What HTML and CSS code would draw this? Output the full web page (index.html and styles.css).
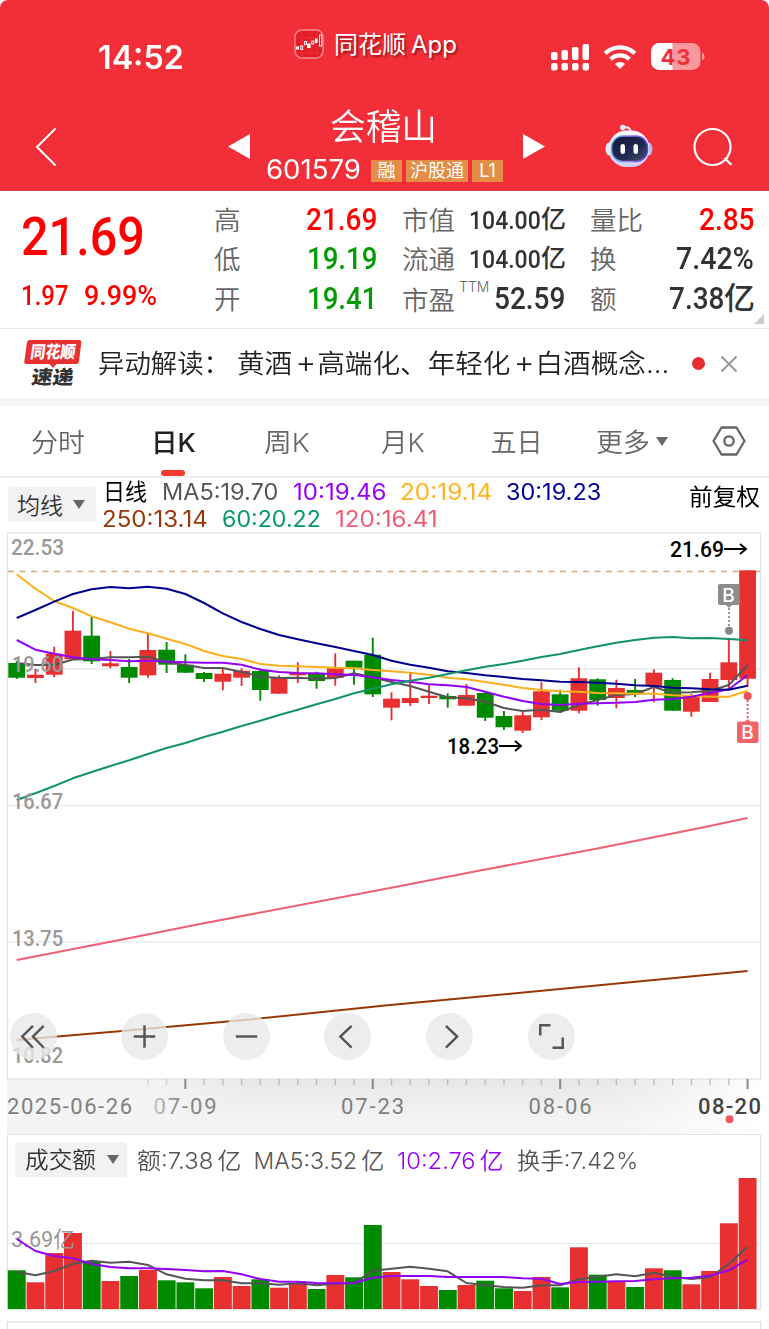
FILE: index.html
```html
<!DOCTYPE html>
<html lang="zh-CN">
<head>
<meta charset="utf-8">
<title>会稽山 601579</title>
<link rel="stylesheet" href="styles.css">
</head>
<body>
<header class="header">
  <div class="status">
    <div class="clock"><span data-w="86">14:52</span></div>
    <div class="brand">
      <svg class="brand-icon" width="30" height="30" viewBox="0 0 30 30"><rect x="1" y="1" width="28" height="28" rx="7" fill="#e51d27" stroke="#f78f94" stroke-width="1.4"/><path d="M1 9h28M1 17h28M1 24h28M8 1v28M16 1v28M23 1v28" stroke="#ee4048" stroke-width=".5"/><g fill="#fff"><rect x="2" y="17.5" width="3" height="3"/><rect x="13" y="14.5" width="3.5" height="4.5"/><rect x="21" y="9.500" width="2.5" height="4.500"/></g><g fill="none" stroke="#fff" stroke-width=".9"><rect x="6.700" y="17" width="2" height="3.500"/><rect x="10.500" y="12.500" width="2" height="3"/><rect x="17.800" y="12" width="2" height="3"/><rect x="25.500" y="6" width="2.300" height="11"/></g></svg>
      <span class="brand-name" data-w="72">同花顺</span><span class="brand-app" data-w="46">App</span>
    </div>
    <div class="indicators">
      <svg width="40" height="28" viewBox="0 0 40 28" fill="#fff"><rect x="1" y="9" width="6.500" height="8" rx="2"/><rect x="11.500" y="7" width="6.500" height="10" rx="2"/><rect x="22" y="4" width="6.500" height="13" rx="2"/><rect x="32.500" y="1" width="6.500" height="16" rx="2"/><rect x="1" y="20" width="6.500" height="7.500" rx="2.200"/><rect x="11.500" y="20" width="6.500" height="7.500" rx="2.200"/><rect x="22" y="20" width="6.500" height="7.500" rx="2.200"/><rect x="32.500" y="20" width="6.500" height="7.500" rx="2.200"/></svg>
      <svg class="wifi" width="34" height="26" viewBox="0 0 34 26"><g fill="none" stroke="#fff" stroke-width="4.300"><path d="M2.200 9.400a21.200 21.200 0 0 1 29.600 0"/><path d="M7.700 15.200a13.300 13.300 0 0 1 18.600 0"/></g><path d="M12 20a7.300 7.300 0 0 1 10 0l-5 5z" fill="#fff"/></svg>
      <svg width="54" height="28" viewBox="0 0 54 28"><defs><clipPath id="bat"><rect width="49.500" height="27" rx="8.500"/></clipPath></defs><g clip-path="url(#bat)"><rect width="50" height="28" fill="#f8979c"/><rect width="21.500" height="28" fill="#fff"/></g><path d="M51 9.500q2.600 1 2.600 4t-2.600 4z" fill="#f8979c"/><text x="9.500" y="21.500" textLength="30" class="bat-text">43</text></svg>
    </div>
  </div>
  <div class="nav">
    <svg class="back" width="24" height="40" viewBox="0 0 24 40"><path d="M21.500 1.500 3 20 21.500 38.500" fill="none" stroke="#fff" stroke-width="2"/></svg>
    <svg class="prev" width="22" height="25" viewBox="0 0 22 25"><path d="M22 0v25L0 12.500z" fill="#fff"/></svg>
    <div class="title">
      <div class="name"><span data-w="107">会稽山</span></div>
      <div class="code-row"><span class="code"><span data-w="95">601579</span></span><span class="tag t1">融</span><span class="tag t2">沪股通</span><span class="tag t1">L1</span></div>
    </div>
    <svg class="next" width="22" height="25" viewBox="0 0 22 25"><path d="M0 0v25l22-12.500z" fill="#fff"/></svg>
    <svg class="robot" width="48" height="44" viewBox="0 0 48 44"><defs><linearGradient id="shell" x1="0" y1="0" x2="0" y2="1"><stop stop-color="#fff"/><stop offset="1" stop-color="#cfcff8"/></linearGradient><linearGradient id="face" x1="0" y1="0" x2="1" y2="1"><stop stop-color="#171a3a"/><stop offset=".6" stop-color="#202950"/><stop offset="1" stop-color="#4d5568"/></linearGradient><linearGradient id="rim"><stop stop-color="#5cb6e8"/><stop offset=".5" stop-color="#9a7cf0"/><stop offset="1" stop-color="#5145ef"/></linearGradient></defs><path d="M18 3.500q7-1.500 7.500 4" fill="none" stroke="#eeeeff" stroke-width="2"/><circle cx="17.800" cy="3.500" r="2.700" fill="#e7e6ff"/><ellipse cx="4" cy="25" rx="3.500" ry="6.500" fill="#e6e6fb"/><ellipse cx="44" cy="25" rx="3.500" ry="6.500" fill="#b8b8e8"/><rect x="3.500" y="6.500" width="41" height="36.500" rx="18" fill="url(#shell)"/><rect x="6.500" y="12" width="36" height="25.500" rx="11.500" fill="url(#face)" stroke="url(#rim)" stroke-width="1.500"/><rect x="15.500" y="20" width="4.500" height="10" rx="2.200" fill="#fff"/><rect x="28.500" y="20" width="4.500" height="10" rx="2.200" fill="#fff"/></svg>
    <svg class="search" width="42" height="42" viewBox="0 0 42 42" fill="none" stroke="#fff" stroke-width="2.200"><circle cx="20.500" cy="20" r="18"/><path d="m32.500 31 7 7"/></svg>
  </div>
</header>

<section class="quote">
  <div class="price-block">
    <div class="price din"><span data-w="124">21.69</span></div>
    <div class="change din"><span data-w="48">1.97</span><span data-w="73">9.99%</span></div>
  </div>
  <dl class="stats s1">
    <div><dt>高</dt><dd class="din up"><span data-w="71">21.69</span></dd></div>
    <div><dt>低</dt><dd class="din down"><span data-w="70">19.19</span></dd></div>
    <div><dt>开</dt><dd class="din down"><span data-w="70">19.41</span></dd></div>
  </dl>
  <dl class="stats s2">
    <div><dt>市值</dt><dd class="din small"><span data-w="72">104.00</span><i>亿</i></dd></div>
    <div><dt>流通</dt><dd class="din small"><span data-w="72">104.00</span><i>亿</i></dd></div>
    <div><dt class="low">市盈<sup>TTM</sup></dt><dd class="din"><span data-w="71">52.59</span></dd></div>
  </dl>
  <dl class="stats s3">
    <div><dt>量比</dt><dd class="din up"><span data-w="55">2.85</span></dd></div>
    <div><dt>换</dt><dd class="din"><span data-w="78">7.42%</span></dd></div>
    <div><dt>额</dt><dd class="din"><span data-w="55">7.38</span><i class="big">亿</i></dd></div>
  </dl>
  <span class="corner"></span>
</section>

<section class="news">
  <div class="news-logo">
    <svg width="60" height="60" viewBox="-1 -5 60 60"><path d="M5.500 1H55q2.500 0 2.300 2.500L55 22.500q-.3 2.500-3 2.500H32.500L29 29l-3.500-4H2.500Q0 25 .3 22.500L3 3.500Q3.300 1 5.500 1z" fill="#e93030"/><g transform="skewX(-8)"><text x="8.500" y="19" textLength="45" lengthAdjust="spacingAndGlyphs" class="logo-a">同花顺</text><text x="13" y="45" textLength="42" lengthAdjust="spacingAndGlyphs" class="logo-b">速递</text></g></svg>
  </div>
  <div class="news-text"><span data-w="132">异动解读：</span><span class="news-tail"><span data-w="432">黄酒<b class="plus">+</b>高端化、年轻化<b class="plus">+</b>白酒概念...</span></span></div>
  <span class="news-dot"></span>
  <svg class="close" width="18" height="18" viewBox="0 0 18 18"><path d="M1.500 1.500l15 15M16.500 1.500l-15 15" stroke="#999" stroke-width="2"/></svg>
</section>

<nav class="tabs">
  <a class="tab"><span data-w="54">分时</span></a>
  <a class="tab active"><span data-w="45">日K</span></a>
  <a class="tab"><span data-w="46">周K</span></a>
  <a class="tab"><span data-w="44">月K</span></a>
  <a class="tab"><span data-w="52">五日</span></a>
  <a class="tab more"><span data-w="54">更多</span><b class="caret"></b></a>
  <svg class="gear" width="34" height="30" viewBox="0 0 34 30" fill="none" stroke="#666" stroke-width="2.300"><path d="M9.500 1.500h15L32.500 15l-8 13.500h-15L1.500 15z" stroke-linejoin="round"/><circle cx="17" cy="15" r="4.700"/></svg>
</nav>

<section class="legend">
  <button class="select"><span data-w="46">均线</span><b class="caret"></b></button>
  <div class="ma">
    <div class="ma-row"><span class="period"><span data-w="44">日线</span></span><span class="m5"><span data-w="116">MA5:19.70</span></span><span class="m10"><span data-w="93">10:19.46</span></span><span class="m20"><span data-w="92">20:19.14</span></span><span class="m30"><span data-w="95">30:19.23</span></span></div>
    <div class="ma-row second"><span class="m250"><span data-w="106">250:13.14</span></span><span class="m60"><span data-w="99">60:20.22</span></span><span class="m120"><span data-w="103">120:16.41</span></span></div>
  </div>
  <div class="adjust"><span data-w="71">前复权</span></div>
</section>

<section class="chart">
  <svg id="price" width="769" height="602" viewBox="0 532 769 602"></svg>
  <div class="tools">
    <button><svg viewBox="0 0 46 46"><path d="M22.500 12.500 12 23l10.500 11M33 12.500 22.500 23 33 34"/></svg></button>
    <button><svg viewBox="0 0 46 46"><path d="M12.500 23h21M23 12v22"/></svg></button>
    <button><svg viewBox="0 0 46 46"><path d="M12.500 23h21"/></svg></button>
    <button><svg viewBox="0 0 46 46"><path d="M27 12.500 16 23l11 11"/></svg></button>
    <button><svg viewBox="0 0 46 46"><path d="M19.500 12.500 30.500 23l-11 11"/></svg></button>
    <button><svg viewBox="0 0 46 46"><path d="M12 22V12h10M34 24v10H24"/></svg></button>
  </div>
</section>

<section class="turnover">
  <div class="turnover-head">
    <button class="select wide"><span data-w="71">成交额</span><b class="caret"></b></button>
    <span class="v1"><span data-w="104">额:7.38<b class="unit">亿</b></span></span><span class="v2"><span data-w="131">MA5:3.52<b class="unit">亿</b></span></span><span class="v3"><span data-w="106">10:2.76<b class="unit">亿</b></span></span><span class="v4"><span data-w="121">换手:7.42%</span></span>
  </div>
  <svg id="volume" width="769" height="151" viewBox="0 1178 769 151"></svg>
</section>
<script src="chart.js"></script>
</body>
</html>
```

FILE: styles.css
```css
* { box-sizing: border-box; }
body { margin: 0; width: 769px; height: 1329px; overflow: hidden; background: #fff; color: #333; font-family: Inter, "Noto Sans CJK SC", sans-serif; font-weight: 350; }
svg { display: block; flex: none; }
button { border: 0; padding: 0; font: inherit; color: inherit; }
[data-w] { display: inline-block; white-space: nowrap; transform-origin: left center; }
.din { font-family: Roboto, "Noto Sans CJK SC", sans-serif; font-weight: 500; }

.header { height: 191px; background: #f22f38; border-radius: 8px 8px 0 0; color: #fff; border-bottom: 1px solid #d93b42; }
.status { display: flex; height: 96px; }
.clock { width: 196px; margin-left: 98px; padding-top: 37px; font-size: 33px; line-height: 40px; font-weight: 600; }
.brand { width: 256px; display: flex; padding-top: 29px; line-height: 32px; text-shadow: 2px 2px 2px rgba(90, 0, 0, .55); }
.brand-name { font-size: 24px; margin-left: 10px; font-weight: 400; }
.brand-app { font-size: 24px; margin-left: 5px; font-weight: 400; }
.indicators { display: flex; padding-top: 43px; }
.wifi { margin: 1px 14px 0 13px; }
.bat-text { font: 700 22px Inter, sans-serif; fill: #f0303a; }
.nav { display: flex; }
.back { margin: 31px 0 0 34px; }
.prev { margin: 38px 0 0 170px; }
.title { width: 237px; margin: 9px 20px 0 16px; }
.name { margin-left: 64px; font-size: 36px; line-height: 44px; font-weight: 350; }
.code-row { display: flex; align-items: center; height: 41px; }
.code-row > span { flex: none; }
.code { width: 105px; font-size: 27px; font-weight: 400; }
.tag { background: #e38d47; height: 22px; line-height: 21px; font-size: 18px; text-align: center; margin-right: 4px; margin-top: 2px; font-weight: 400; }
.t1 { width: 31px; }
.t2 { width: 62px; }
.next { margin-top: 38px; }
.robot { margin: 28px 0 0 60px; }
.search { margin: 31px 0 0 39px; }

.quote { position: relative; display: flex; height: 138px; border-bottom: 1px solid #e6e6e6; }
.price-block { width: 214px; padding: 13px 0 0 21px; color: #f00; }
.price { font-size: 54px; line-height: 66px; }
.change { display: flex; gap: 15px; font-size: 28px; line-height: 51px; }
.stats { margin: 9px 0 0; }
.stats > div { display: flex; justify-content: space-between; height: 39.5px; align-items: center; }
.s1 { width: 163px; margin-right: 25px; }
.s2 { width: 163px; margin-right: 25px; }
.s3 { width: 164px; }
dt { font-size: 26.5px; color: #666; line-height: 38px; }
dt.low { padding-top: 3px; white-space: nowrap; display: flex; }
sup { font-size: 14px; line-height: 15px; letter-spacing: 0; margin: -2px 0 0 4px; font-weight: 300; }
dd { margin: 0; font-size: 31.5px; line-height: 38px; display: flex; align-items: center; }
dd.small { font-size: 26.5px; }
dd i { font-style: normal; font-size: 25px; font-weight: 500; margin-right: -1px; }
dd i.big { font-size: 31px; margin-right: -1px; }
.up { color: #f00; }
.down { color: #049a04; }
.corner { position: absolute; right: 5px; bottom: 4px; border-left: 10px solid transparent; border-bottom: 10px solid #ccc; }

.news { display: flex; height: 77px; border-bottom: 8px solid #f4f4f4; align-items: center; }
.news-logo { width: 98px; padding-left: 23px; }
.logo-a { font: 900 17px "Noto Sans CJK SC", sans-serif; fill: #fff; }
.logo-b { font: 900 19px "Noto Sans CJK SC", sans-serif; fill: #333; }
.news-text { display: flex; width: 593.500px; font-size: 26px; line-height: 34px; padding-top: 1px; color: #222; }
.news-tail { margin-left: 7px; }
.plus { font-size: 30px; line-height: 20px; font-weight: 300; padding: 0 1px 0 3px; }
.news-dot { width: 13.500px; height: 13.500px; border-radius: 50%; background: #e82d2d; margin-right: 15px; }

.tabs { display: flex; height: 72px; border-bottom: 2px solid #f0f0f0; font-size: 26px; color: #666; }
.tab { position: relative; padding-top: 16px; line-height: 41px; margin-left: 31px; display: flex; }
.tab.active { margin-left: 66px; color: #222; font-weight: 500; }
.tab.active::after { content: ""; position: absolute; left: 10px; bottom: 0; width: 24px; height: 6px; border-radius: 3px; background: #fb382e; }
.tab:nth-child(3) { margin-left: 68px; }
.tab:nth-child(4) { margin-left: 71px; }
.tab:nth-child(5) { margin-left: 66px; }
.tab.more { margin-left: 53px; }
.caret { border: 6.500px solid transparent; border-top: 9px solid #666; border-bottom: 0; }
.tab .caret { margin: 15px 0 0 6px; }
.gear { margin: 20px 0 0 44px; }

.legend { display: flex; height: 54px; }
.select { display: flex; align-items: center; width: 88px; height: 35px; margin: 9px 0 0 8px; padding: 0 0 2px 9px; background: #f2f2f2; border-radius: 4px; font-size: 23px; color: #333; }
.select .caret { margin: 2px 0 0 10px; }
.ma { width: 593px; padding: 0 0 0 7px; margin-top: -1px; font-size: 22.5px; font-weight: 400; }
.ma-row { display: flex; height: 27px; line-height: 29px; gap: 14.200px; }
.ma-row.second { margin-left: -1px; }
.period { color: #000; }
.m5 { color: #555; margin-left: 1px; }
.m10 { color: #9800fa; }
.m20 { color: #ffb31e; }
.m30 { color: #00009c; margin-left: -1px; }
.m250 { color: #983707; }
.m60 { color: #09986a; }
.m120 { color: #f05c74; }
.adjust { font-size: 23px; line-height: 38px; color: #000; font-weight: 400; }

.chart { position: relative; height: 602px; }
.tools { position: absolute; left: 10px; top: 481px; display: flex; gap: 54.800px; }
.tools button { width: 47px; height: 47px; border-radius: 50%; background: rgba(232, 232, 232, .8); }
.tools button:first-child { margin-right: 9px; }
.tools path { fill: none; stroke: #555; stroke-width: 2.400; }
.turnover-head { display: flex; align-items: center; height: 44px; margin: 0 8px 0 7px; border: 1px solid #e4e4e4; border-width: 1px 1px 0; font-size: 23px; color: #555; line-height: 36px; }
.select.wide { width: 112px; height: 35px; margin: 6px 10px 0 7px; padding: 0 0 0 10px; }
.select.wide .caret { margin: 0 0 0 11px; }
.turnover-head > span { padding-top: 9px; margin-right: 13.200px; }
.turnover-head .v1 { margin-right: 12.200px; }
.unit { font-weight: inherit; margin-left: 4px; }
.v3 { color: #9800fa; }

.axis { font: 500 22px Roboto, "Noto Sans CJK SC", sans-serif; fill: #999; }
.axis.cn { font-weight: 400; }
.date { font: 400 22px Roboto, sans-serif; fill: #808080; }
.date.now { fill: #444; font-weight: 500; }
.date.lead { fill: url(#first); }
.mark { font: 500 22px Roboto, sans-serif; fill: #000; }
.flag { font: 500 19px Inter, sans-serif; fill: #fff; }
```

FILE: chart.js
```js
// Scale labelled runs of text to their column width.
document.querySelectorAll('[data-w]').forEach(el => {
  const natural = el.offsetWidth, w = +el.dataset.w;
  el.style.transform = `scaleX(${w / natural})`;
  el.style.marginRight = `${w - natural}px`;
});

const RED = '#e83030', GREEN = '#008a00';
const X0 = 16.7, STEP = 18.74;
const cx = i => X0 + i * STEP;
const line = (ys, color, w = 2) =>
  `<polyline fill="none" stroke="${color}" stroke-width="${w}" stroke-linejoin="round" points="${ys.map((y, i) => cx(i).toFixed(1) + ',' + y).join(' ')}"/>`;
const label = (x, y, w, cls, t, adjust = 'spacingAndGlyphs') =>
  `<text x="${x}" y="${y}" textLength="${w}" lengthAdjust="${adjust}" class="${cls}">${t}</text>`;

// direction, body top, body bottom, wick top, wick bottom
const candles = [
  ['g',663,677.7,661,679],['r',674.7,678,668.7,683],['r',653.7,674.7,646.7,677.3],['r',630.7,659.3,611,659.3],
  ['g',635.7,661.3,616.7,664],['r',663.3,666.3,651,668.3],['g',667,677.7,659,683],['r',650,675.3,634,677.7],
  ['g',649.7,664.7,642,673],['g',664.7,672.7,654.3,673],['g',673,679,672,682],['r',673.7,681.7,667.7,690.3],
  ['r',670.7,677.7,668.3,686],['g',671,690,668.3,700.7],['r',677,693.7,675.3,693.7],['r',673,675.3,662.3,683],
  ['g',673.3,681,671.7,688.7],['r',668.3,678,653.3,685.7],['g',660.7,667.7,660.7,684.7],['g',654.7,694.3,637.7,697],
  ['r',698.7,707.7,692.3,720.3],['r',698,703,674,706],['r',695.7,698,685.3,704],['g',696,699.3,693.3,707.7],
  ['r',695,705.7,684,705.7],['g',693,717.7,691.7,721],['g',716,727.3,711,730],['r',715.3,730.7,711.3,733],
  ['r',691.3,717.3,682.3,720],['g',694.3,710.7,689.7,711.7],['r',678.3,710.7,667.3,713.3],['g',679.3,700,678.3,705.7],
  ['r',688,698,679.7,708.3],['g',690,694.3,679,697],['r',672.7,686,669.3,702.3],['g',680,710.7,678.3,711],
  ['r',695.7,711.7,694,716.7],['r',679,702,672.7,702],['r',662.3,680,639.3,690],['r',570.3,678.7,570.3,687]
];
const ma5 = [663,665,665,659.5,659,657.3,657.3,656.7,662.3,665,668,668,672,676.5,678,677.7,678.7,678,673.3,677.3,682,686,691.7,697.3,698.3,701.7,708,711,709.7,712,705,700,695,694,687,692.7,692.3,690.7,685,665];
const ma10 = [640,649.7,653.7,657.3,659.3,660,661.3,660.7,661.7,662.3,662.7,662.7,664.7,669.7,672,673,673.3,674.3,675,677.3,680,681.7,684.3,685.3,687,691.7,696.7,701,704,705,703.7,703.3,702.7,702,699.7,699,696.7,693,689.3,675.3];
const ma20 = [574.3,588.7,601,608,616.3,622.3,628.7,633.3,638.7,644,651,656,659,664,665.7,666.3,667,667.7,668.3,670,671.3,672.7,674.7,677.7,679.3,682,684.7,688,690,691.3,691.7,693,693.3,693.7,693.7,695.3,696,696.7,696.7,690.7];
const ma30 = [618,610,601.7,594,589.3,587,588.3,586.7,588.7,594,603,613.3,622,629,635,639.3,643.3,647,651,655,660.7,664.7,667.7,671.3,673,675.3,677,679,680.3,681.7,682,682.7,683.7,685.3,686,687.7,688.3,689.3,689.7,685.7];
const ma60 = [800,793.3,786,778.3,772,766,760.3,754,748,743,737,731.7,726,720.7,715,709.7,704.3,699,693.3,688.7,684.3,680.7,677.7,674,670.3,666.7,664,660.7,657,654,650,646.3,642.7,640,637.7,637,638.3,638,639,640.3];

let s = `<defs><linearGradient id="band"><stop stop-color="#f4f4f4"/><stop offset=".82" stop-color="#f4f4f4"/><stop offset="1" stop-color="#fff"/></linearGradient>
<linearGradient id="shade" x1="0" y1="0" x2="0" y2="1"><stop stop-color="#e6e6e6"/><stop offset="1" stop-color="#e6e6e6" stop-opacity="0"/></linearGradient>
<linearGradient id="fade"><stop stop-color="#000"/><stop offset=".2" stop-color="#fff"/><stop offset=".7" stop-color="#fff"/><stop offset="1" stop-color="#000"/></linearGradient>
<mask id="sides"><rect x="140" y="1079" width="620" height="56" fill="url(#fade)"/></mask>
<linearGradient id="first" gradientUnits="userSpaceOnUse" x1="152" x2="180"><stop stop-color="#c8c8c8"/><stop offset="1" stop-color="#858585"/></linearGradient></defs>
<rect x="7" y="1079" width="754" height="56" fill="url(#band)"/>
<rect x="140" y="1079" width="620" height="40" fill="url(#shade)" mask="url(#sides)"/>
<rect x="7.500" y="533" width="753" height="546" fill="#fff" stroke="#e2e2e2" stroke-width="1.300"/>
<path d="M8 669h752M8 805.500h752M8 942h752" stroke="#ececec" stroke-width="1.300"/>
<path d="M8 571.500h752" stroke="#d8ac74" stroke-width="1.300" stroke-dasharray="6 5.500"/>`;
candles.forEach(([d, t, b, wt, wb], i) => {
  const x = cx(i), c = d === 'r' ? RED : GREEN;
  s += `<path d="M${x} ${wt}V${wb}" stroke="${c}" stroke-width="1.900"/><rect x="${x - 8.4}" y="${t}" width="16.800" height="${b - t}" fill="${c}"/>`;
});
s += line(ma5, '#555') + line(ma20, '#fbb01c') + line(ma10, '#9400f4') + line(ma30, '#00008f') + line(ma60, '#109468');
s += '<path d="M16.700 960 130 938 200 924 390 888 480 870.500 600 848 700 828 747.600 818" fill="none" stroke="#ee6173" stroke-width="2"/>';
s += '<path d="M16.700 1040 122 1031 250 1019.500 385 1005.500 560 989 747.600 971" fill="none" stroke="#983806" stroke-width="2"/>';
s += label(11, 555, 53, 'axis', '22.53') + label(12, 672, 51, 'axis', '19.60') + label(12, 809, 51, 'axis', '16.67') + label(12, 946, 51, 'axis', '13.75') + label(12, 1062.5, 51, 'axis', '10.82');
s += label(670, 557, 54, 'mark', '21.69') + label(447, 754, 52, 'mark', '18.23');
s += '<g fill="none" stroke="#000" stroke-width="1.900"><path d="M724 549h22M740 544l6 5-6 5"/><path d="M499 746h22M515 741l6 5-6 5"/></g>';
// trade markers
s += `<rect x="718" y="584" width="21.500" height="21" rx="2" fill="#8d8d8d"/><path d="M726 605h6l-3 3z" fill="#8d8d8d"/><path d="M729 608v20" stroke="#8d8d8d" stroke-width="1.800" stroke-dasharray="2 2"/><circle cx="729" cy="630.700" r="4" fill="#888"/><text x="722.300" y="601.500" class="flag">B</text>
<circle cx="747.600" cy="696" r="4" fill="#ea5055"/><path d="M747.600 700v20" stroke="#ea5055" stroke-width="1.800" stroke-dasharray="2 2"/><path d="M744.600 722h6l-3-3z" fill="#f26468"/><rect x="737" y="721.500" width="21.500" height="21.500" rx="2" fill="#f26468"/><text x="741.300" y="739.300" class="flag">B</text>`;
for (let i = 7; i < 40; i++) {
  const major = i % 10 === 9;
  s += `<path d="M${cx(i)} 1079v${major ? 10 : 6}" stroke="${major ? '#888' : '#bbb'}" stroke-width="${major ? 2 : 1.400}" opacity="${i < 9 ? .6 : 1}"/>`;
}
s += label(7, 1113.5, 125, 'date', '2025-06-26', 'spacing') + label(153.5, 1113.5, 63, 'date lead', '07-09', 'spacing') + label(341, 1113.5, 63, 'date', '07-23', 'spacing') + label(528.5, 1113.5, 63, 'date', '08-06', 'spacing') + label(698, 1113.5, 63, 'date now', '08-20', 'spacing');
s += '<circle cx="729.500" cy="1119.300" r="4" fill="#f05a5e"/>';
document.getElementById('price').innerHTML = s;

// turnover bars: direction and top edge
const bars = 'g1270.3 r1282.3 r1253 r1233 g1261.7 r1281 g1276 r1270 g1280.3 g1282.3 g1288.3 r1277 r1286 g1279.3 r1287.7 r1283.7 g1289 r1275 g1277.3 g1225 r1272 r1279.3 r1286 g1290 r1285 g1280.7 g1288.3 r1291 r1277 g1287.3 r1247.3 g1274.7 r1281.7 g1287 r1268.3 g1270.3 r1284.3 r1271 r1223.3 r1178'.split(' ');
const fromOffset = a => a.map(v => (1165 + v / 3).toFixed(1));
const v5 = fromOffset([320,331,318,296,287,293,290,300,328,341,346,346,355,355,359,355,361,356,354,317,311,305,311,319,354,361,366,368,361,361,343,335,328,334,323,336,342,337,297,245]);
const v10 = fromOffset([222,258,273,280,297,306,310,310,312,315,319,318,328,342,350,350,354,355,354,338,333,333,333,336,336,336,336,340,341,357,351,350,349,348,343,340,338,332,316,284]);
let v = '<path d="M7.500 1178v131.500h753V1178M7.500 1330v-8h753v8" fill="none" stroke="#e2e2e2" stroke-width="1.300"/><path d="M8 1243.500h752" stroke="#e8e8e8" stroke-width="1.200"/>';
bars.forEach((b, i) => {
  const top = +b.slice(1);
  v += `<rect x="${7.8 + i * STEP}" y="${top}" width="17.900" height="${1309 - top}" fill="${b[0] === 'r' ? RED : GREEN}"/>`;
});
v += label(11, 1246.5, 64, 'axis cn', '3.69亿') + line(v5, '#555') + line(v10, '#9400f4');
document.getElementById('volume').innerHTML = v;
```
